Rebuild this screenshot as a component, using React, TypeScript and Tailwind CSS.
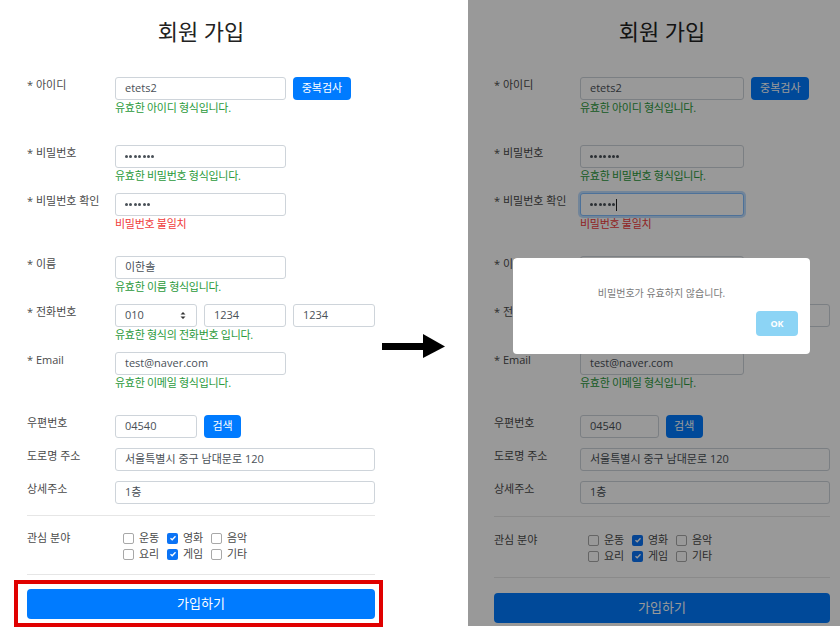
import React from "react";

type FormProps = { labelW: string; dimFocus?: boolean };

function Row({
  label,
  labelW,
  className = "",
  children,
}: {
  label: string;
  labelW: string;
  className?: string;
  children: React.ReactNode;
}) {
  return (
    <div className={`flex ${className}`}>
      <div className={`${labelW} shrink-0 text-[11px] leading-4 text-[#4a4a4a]`}>{label}</div>
      <div className="min-w-0 flex-1">{children}</div>
    </div>
  );
}

function Box({
  children,
  className = "",
  focused = false,
}: {
  children?: React.ReactNode;
  className?: string;
  focused?: boolean;
}) {
  return (
    <div
      className={`flex h-[23px] items-center rounded-[3px] border bg-white px-[9px] text-[11px] text-[#495057] ${
        focused ? "border-[#80bdff] shadow-[0_0_0_2px_rgba(0,123,255,0.25)]" : "border-[#ced4da]"
      } ${className}`}
    >
      {children}
    </div>
  );
}

function Helper({ children, error = false, hidden = false }: { children: React.ReactNode; error?: boolean; hidden?: boolean }) {
  return (
    <div
      className={`text-[11px] leading-4 tracking-[-0.3px] ${error ? "text-[#f03c3c]" : "text-[#2b9a3b]"} ${
        hidden ? "invisible" : ""
      }`}
    >
      {children}
    </div>
  );
}

function Dots({ n }: { n: number }) {
  return (
    <span className="flex gap-[1.4px]">
      {Array.from({ length: n }).map((_, i) => (
        <span key={i} className="h-[3px] w-[3px] rounded-full bg-[#495057]" />
      ))}
    </span>
  );
}

function Check({ label, checked = false }: { label: string; checked?: boolean }) {
  return (
    <div className="flex w-[44px] items-center gap-[5px]">
      {checked ? (
        <span className="flex h-[11px] w-[11px] items-center justify-center rounded-[2px] bg-[#0b73f5]">
          <svg width="8" height="8" viewBox="0 0 8 8">
            <path d="M1.5 4.2 L3.2 5.8 L6.5 2.2" fill="none" stroke="white" strokeWidth="1.3" />
          </svg>
        </span>
      ) : (
        <span className="h-[11px] w-[11px] rounded-[2px] border border-[#a8a8a8] bg-white" />
      )}
      <span className="text-[11px] leading-4 text-[#4a4a4a]">{label}</span>
    </div>
  );
}

function SignupForm({ labelW, dimFocus = false }: FormProps) {
  // in the dimmed copy, the modal sits over the name/phone rows
  const covered = dimFocus;
  return (
    <div className="flex flex-col">
      <h1 className="pt-[16px] text-center text-[22px] font-normal leading-[30px] text-[#222]">회원 가입</h1>

      <Row label="* 아이디" labelW={labelW} className="mt-[31px]">
        <div className="grid grid-cols-3 gap-x-[7px]">
          <Box className="col-span-2">etets2</Box>
          <div className="flex h-[23px] w-[58px] items-center justify-center rounded-[4px] bg-[#007bff] text-[11px] text-white">
            중복검사
          </div>
        </div>
        <Helper>유효한 아이디 형식입니다.</Helper>
      </Row>

      <Row label="* 비밀번호" labelW={labelW} className="mt-[29px]">
        <div className="grid grid-cols-3 gap-x-[7px]">
          <Box className="col-span-2">
            <Dots n={7} />
          </Box>
        </div>
        <Helper>유효한 비밀번호 형식입니다.</Helper>
      </Row>

      <Row label="* 비밀번호 확인" labelW={labelW} className="mt-[9px]">
        <div className="grid grid-cols-3 gap-x-[7px]">
          <Box className="col-span-2" focused={dimFocus}>
            <Dots n={6} />
            {dimFocus && <span className="ml-[1px] h-[12px] w-px bg-[#222]" />}
          </Box>
        </div>
        <Helper error>비밀번호 불일치</Helper>
      </Row>

      <Row label="* 이름" labelW={labelW} className="mt-[24px]">
        <div className="grid grid-cols-3 gap-x-[7px]">
          <Box className="col-span-2">
            <span className={covered ? "invisible" : ""}>이한솔</span>
          </Box>
        </div>
        <Helper hidden={covered}>유효한 이름 형식입니다.</Helper>
      </Row>

      <Row label="* 전화번호" labelW={labelW} className="mt-[9px]">
        <div className="grid grid-cols-3 gap-x-[7px]">
          <Box className="justify-between">
            <span className={covered ? "invisible" : ""}>010</span>
            <svg width="6" height="9" viewBox="0 0 6 9" className="mr-[1px]">
              <path d="M0.5 3.5 L3 1 L5.5 3.5 Z M0.5 5.5 L3 8 L5.5 5.5 Z" fill="#333" />
            </svg>
          </Box>
          <Box>
            <span className={covered ? "invisible" : ""}>1234</span>
          </Box>
          <Box>
            <span className={covered ? "invisible" : ""}>1234</span>
          </Box>
        </div>
        <Helper hidden={covered}>유효한 형식의 전화번호 입니다.</Helper>
      </Row>

      <Row label="* Email" labelW={labelW} className="mt-[9px]">
        <div className="grid grid-cols-3 gap-x-[7px]">
          <Box className="col-span-2">test@naver.com</Box>
        </div>
        <Helper>유효한 이메일 형식입니다.</Helper>
      </Row>

      <Row label="우편번호" labelW={labelW} className="mt-[24px]">
        <div className="grid grid-cols-3 gap-x-[7px]">
          <Box>04540</Box>
          <div className="flex h-[23px] w-[37px] items-center justify-center rounded-[4px] bg-[#007bff] text-[11px] text-white">
            검색
          </div>
        </div>
      </Row>

      <Row label="도로명 주소" labelW={labelW} className="mt-[10px]">
        <Box>서울특별시 중구 남대문로 120</Box>
      </Row>

      <Row label="상세주소" labelW={labelW} className="mt-[10px]">
        <Box>1층</Box>
      </Row>

      <div className={`h-px bg-[#e6e6e6] ${dimFocus ? "mt-[12px]" : "mt-[11px]"}`} />

      <Row label="관심 분야" labelW={labelW} className={dimFocus ? "mt-[15px]" : "mt-[14px]"}>
        <div className="pl-[8px]">
          <div className="flex">
            <Check label="운동" />
            <Check label="영화" checked />
            <Check label="음악" />
          </div>
          <div className="flex">
            <Check label="요리" />
            <Check label="게임" checked />
            <Check label="기타" />
          </div>
        </div>
      </Row>

      <div className={`h-px bg-[#e6e6e6] ${dimFocus ? "mt-[13px]" : "mt-[12px]"}`} />

      <div className={`relative ${dimFocus ? "mt-[15px]" : "mt-[14px]"}`}>
        <div className="flex h-[30px] items-center justify-center rounded-[4px] bg-[#007bff] text-[13px] text-white">
          가입하기
        </div>
        {!dimFocus && (
          <div className="absolute -bottom-[8px] -left-[13px] -right-[8px] -top-[9px] border-[4px] border-[#e00000]" />
        )}
      </div>
    </div>
  );
}

export default function App() {
  return (
    <div className="flex h-[632px] w-[840px] items-start overflow-hidden bg-white font-['Open_Sans','Noto_Sans_CJK_KR',sans-serif]">
      <div className="w-[380px] shrink-0 pl-[27px] pr-[5px]">
        <SignupForm labelW="w-[88px]" />
      </div>

      <div className="w-[88px] shrink-0 pl-[2px] pt-[334px]">
        <svg width="64" height="24" viewBox="0 0 64 24">
          <rect x="0" y="9" width="42" height="7" fill="#000" />
          <polygon points="41,0 63,12.5 41,24" fill="#000" />
        </svg>
      </div>

      <div className="relative h-[626px] w-[372px] shrink-0 overflow-hidden pl-[26px] pr-[10px]">
        <SignupForm labelW="w-[86px]" dimFocus />
        <div className="absolute inset-0 bg-black/40" />
        <div className="absolute left-[45px] top-[258px] flex h-[96px] w-[297px] flex-col rounded-[4px] bg-white">
          <div className="pt-[27px] text-center text-[10px] leading-4 text-[#797979]">비밀번호가 유효하지 않습니다.</div>
          <div className="mt-[10px] flex justify-end pr-[12px]">
            <div className="flex h-[25px] w-[42px] items-center justify-center rounded-[4px] bg-[#8cd4f5] text-[9px] font-bold text-white">
              OK
            </div>
          </div>
        </div>
      </div>
    </div>
  );
}
